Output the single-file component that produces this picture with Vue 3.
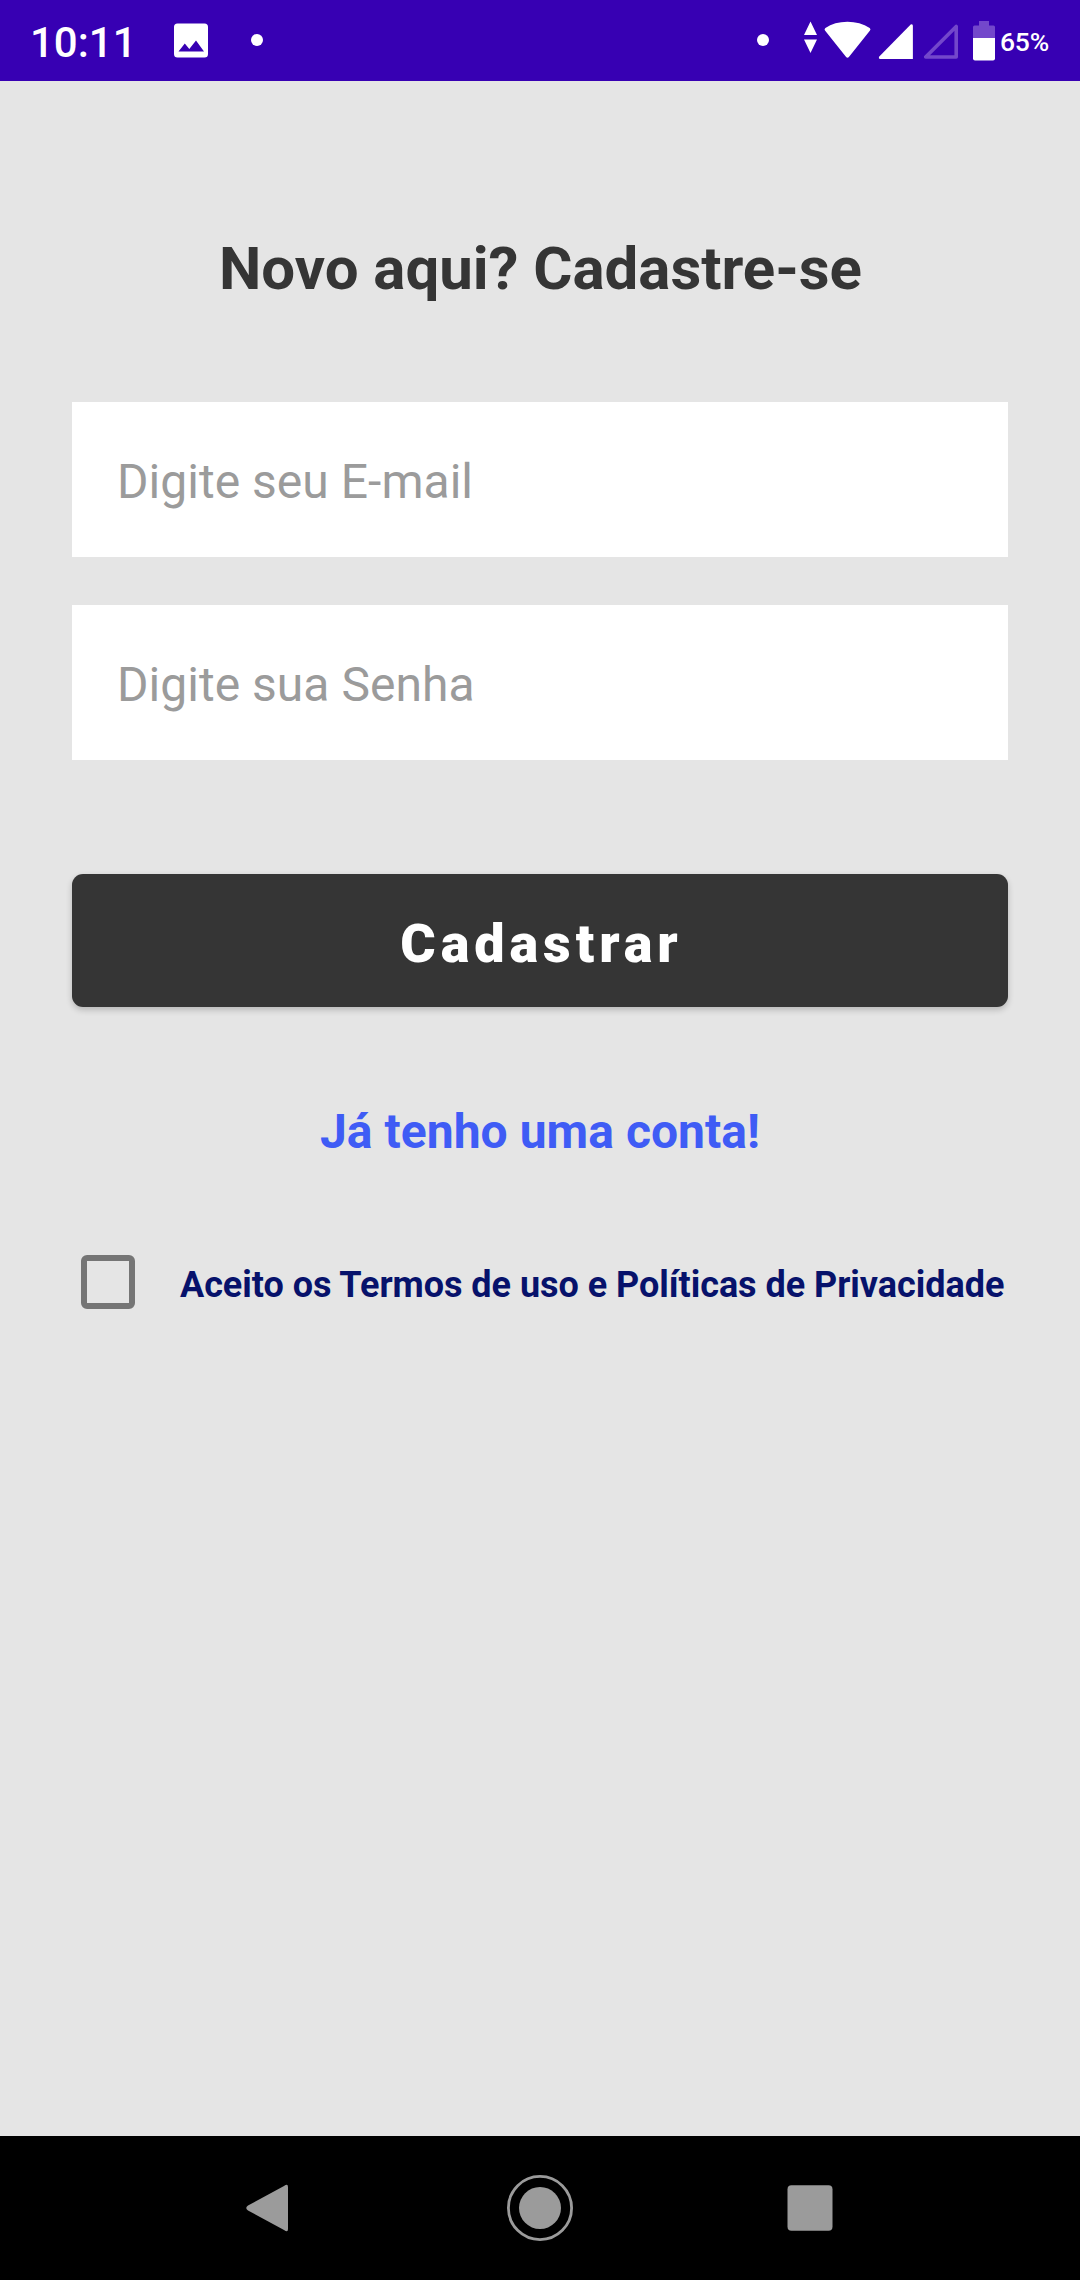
<script setup>
import { ref } from 'vue'

const fields = ['Digite seu E-mail', 'Digite sua Senha']
const accepted = ref(false)
</script>

<template>
  <div class="screen">
    <header class="status">
      <span class="clock">10:11</span>
      <svg class="photo" width="36" height="36" viewBox="0 0 36 36">
        <path fill="#fff" fill-rule="evenodd" d="M4.500 .5H31.500Q35 .5 35 4V31Q35 34.500 31.500 34.500H4.500Q1 34.500 1 31V4Q1 .5 4.500 .5ZM5.500 28.500H31L23 17.500L16.300 26L11.800 20.500Z" />
      </svg>
      <i class="dot"></i>
      <i class="dot dot-right"></i>
      <svg class="signals" width="192" height="40" viewBox="0 0 192 40">
        <path fill="#fff" d="M7.500 .5L14 14H1ZM1 18.500H14L7.500 32Z" />
        <path fill="#fff" d="M22 9.500Q20.900 8 22.400 7Q31.500 .8 44.500 .8Q57 .8 66.700 7Q68.100 8 67 9.500L45.900 36Q44.500 37.600 43.100 36Z" />
        <path fill="#fff" d="M107.700 3.500Q109.900 2.600 109.900 5V38H77.500Q75 38 76.300 35.500Z" />
        <path fill="none" stroke="#7347cb" stroke-width="3.600" stroke-linejoin="round" d="M153.200 5.500V36H122.700Z" />
        <path fill="#7347cb" d="M176 0H186V4.500H190.500Q192 4.500 192 6V18H170V6Q170 4.500 171.500 4.500H176Z" />
        <path fill="#fff" d="M170 17H192V37.500Q192 39.500 190 39.500H172Q170 39.500 170 37.500Z" />
      </svg>
      <span class="percent">65%</span>
    </header>

    <main class="content">
      <h1 class="title">Novo aqui? Cadastre-se</h1>
      <div class="fields">
        <div v-for="label in fields" :key="label" class="field">{{ label }}</div>
      </div>
      <button class="submit" type="button"><span>Cadastrar</span></button>
      <a class="login">Já tenho uma conta!</a>
      <div class="terms" @click="accepted = !accepted">
        <span class="box" :class="{ checked: accepted }"></span>
        <span class="terms-text">Aceito os Termos de uso e Políticas de Privacidade</span>
      </div>
    </main>

    <nav class="nav">
      <svg width="80" height="80" viewBox="0 0 80 80">
        <path fill="#9b9b9b" d="M54 18Q58 15 58 19V61Q58 65 54 62L18 42.500Q14.500 40 18 37.500Z" />
      </svg>
      <svg width="80" height="80" viewBox="0 0 80 80">
        <circle cx="40" cy="40" r="31.600" fill="none" stroke="#9b9b9b" stroke-width="2.800" />
        <circle cx="40" cy="40" r="21" fill="#9b9b9b" />
      </svg>
      <svg width="80" height="80" viewBox="0 0 80 80">
        <rect x="17.500" y="17.300" width="45" height="45.400" rx="4" fill="#9b9b9b" />
      </svg>
    </nav>
  </div>
</template>

<style>
body {
  margin: 0;
}
</style>

<style scoped>
.screen {
  width: 1080px;
  height: 2280px;
  display: flex;
  flex-direction: column;
  background: #e5e5e5;
  font-family: Roboto, "Liberation Sans", sans-serif;
}
.status {
  height: 81px;
  flex: none;
  display: flex;
  align-items: center;
  box-sizing: border-box;
  padding-left: 30px;
  background: #3700b3;
  color: #fff;
}
.clock {
  width: 143px;
  font-size: 42px;
  line-height: 50px;
  font-weight: 500;
  padding-top: 4px;
  box-sizing: border-box;
}
.photo {
  flex: none;
}
.dot {
  width: 12px;
  height: 12px;
  flex: none;
  margin: 0 0 1px 42px;
  border-radius: 50%;
  background: #fff;
}
.dot-right {
  margin-left: 494px;
}
.signals {
  flex: none;
  margin-left: 34px;
  overflow: visible;
}
.percent {
  margin-left: 5px;
  font-size: 26.500px;
  line-height: 32px;
  font-weight: 500;
  letter-spacing: -0.200px;
  padding-top: 2px;
}
.content {
  flex: 1;
  display: flex;
  flex-direction: column;
  padding: 152px 72px 0;
}
.title {
  margin: 0;
  padding: 1px 0 0 1px;
  font-size: 60px;
  line-height: 70px;
  font-weight: 700;
  letter-spacing: -0.040px;
  text-align: center;
  color: #353535;
}
.fields {
  display: flex;
  flex-direction: column;
  gap: 48px;
  margin-top: 98px;
}
.field {
  height: 155px;
  box-sizing: border-box;
  padding: 52px 45px 0;
  background: #fff;
  color: #9b9b9b;
  font-size: 48px;
  line-height: 56px;
  letter-spacing: 0.030px;
}
.submit {
  height: 133px;
  margin-top: 114px;
  padding: 7px 0 0 3px;
  border: 0;
  border-radius: 11px;
  background: #353535;
  box-shadow: 0 3px 6px rgba(0, 0, 0, 0.2);
  color: #fff;
  font-family: inherit;
  font-size: 54px;
  line-height: 64px;
  font-weight: 900;
  letter-spacing: 4.900px;
}
.login {
  margin-top: 97px;
  color: #3f5cf5;
  font-size: 48px;
  line-height: 56px;
  font-weight: 700;
  letter-spacing: 0.040px;
  text-align: center;
}
.terms {
  display: flex;
  align-items: flex-start;
  margin: 95px 0 0 9px;
}
.box {
  width: 54px;
  height: 54px;
  flex: none;
  box-sizing: border-box;
  border: 6px solid #757575;
  border-radius: 6px;
}
.checked {
  background: #757575;
}
.terms-text {
  margin: 9px 0 0 45px;
  color: #07126b;
  font-size: 36px;
  line-height: 42px;
  font-weight: 700;
  letter-spacing: -0.035px;
  white-space: nowrap;
}
.nav {
  height: 144px;
  flex: none;
  display: flex;
  justify-content: center;
  align-items: center;
  gap: 190px;
  background: #000;
}
</style>
